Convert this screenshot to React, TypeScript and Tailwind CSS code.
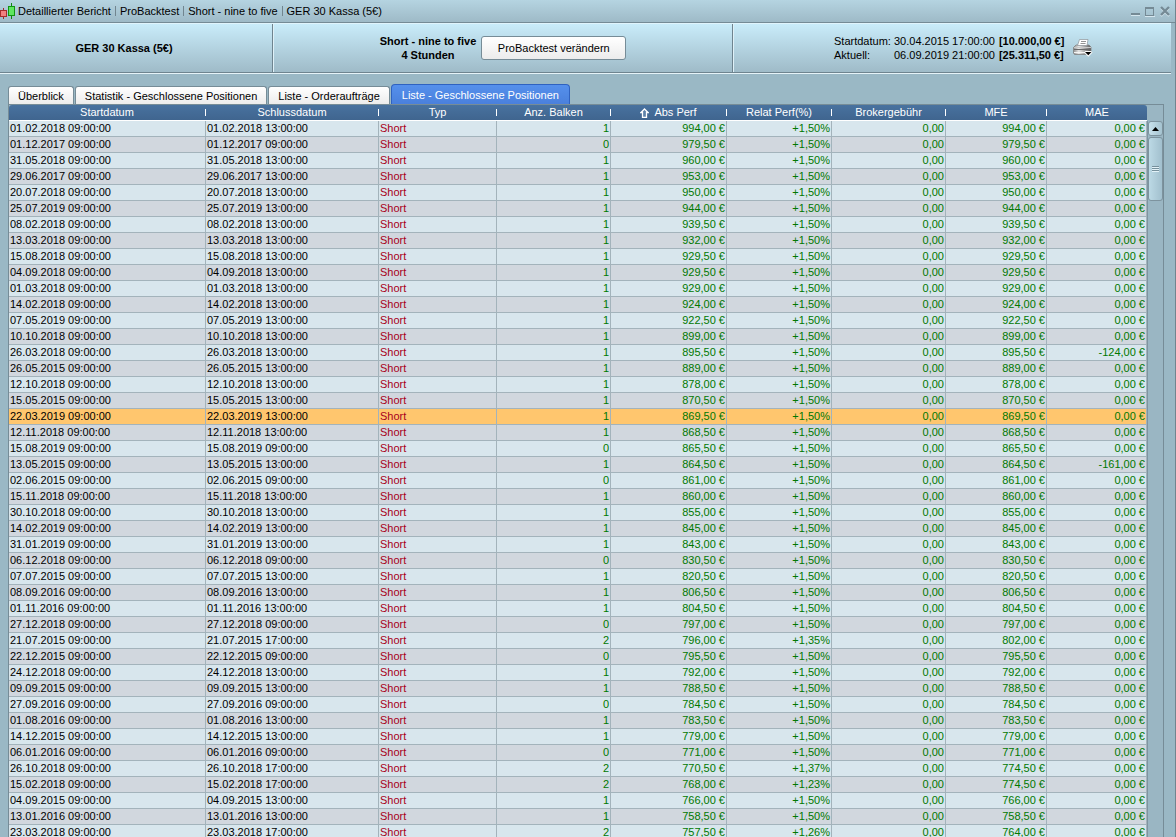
import React from "react";

type Position = {
  date: string;
  endHour: string;
  bars: number;
  perf: string;
  rel: string;
  mfe: string;
  mae: string;
};

/* date | closing hour | bars | abs. performance | rel. performance | MFE | MAE */
const SOURCE = `01.02.2018|13|1|994,00
01.12.2017|09|0|979,50
31.05.2018|13|1|960,00
29.06.2017|13|1|953,00
20.07.2018|13|1|950,00
25.07.2019|13|1|944,00
08.02.2018|13|1|939,50
13.03.2018|13|1|932,00
15.08.2018|13|1|929,50
04.09.2018|13|1|929,50
01.03.2018|13|1|929,00
14.02.2018|13|1|924,00
07.05.2019|13|1|922,50
10.10.2018|13|1|899,00
26.03.2018|13|1|895,50|1,50|895,50|-124,00
26.05.2015|13|1|889,00
12.10.2018|13|1|878,00
15.05.2015|13|1|870,50
22.03.2019|13|1|869,50
12.11.2018|13|1|868,50
15.08.2019|09|0|865,50
13.05.2015|13|1|864,50|1,50|864,50|-161,00
02.06.2015|09|0|861,00
15.11.2018|13|1|860,00
30.10.2018|13|1|855,00
14.02.2019|13|1|845,00
31.01.2019|13|1|843,00
06.12.2018|09|0|830,50
07.07.2015|13|1|820,50
08.09.2016|13|1|806,50
01.11.2016|13|1|804,50
27.12.2018|09|0|797,00
21.07.2015|17|2|796,00|1,35|802,00
22.12.2015|09|0|795,50
24.12.2018|13|1|792,00
09.09.2015|13|1|788,50
27.09.2016|09|0|784,50
01.08.2016|13|1|783,50
14.12.2015|13|1|779,00
06.01.2016|09|0|771,00
26.10.2018|17|2|770,50|1,37|774,50
15.02.2018|17|2|768,00|1,23|774,50
04.09.2015|13|1|766,00
13.01.2016|13|1|758,50
23.03.2018|17|2|757,50|1,26|764,00`;

const POSITIONS: Position[] = SOURCE.split("\n").map((line) => {
  const [date, endHour, bars, perf, rel = "1,50", mfe = perf, mae = "0,00"] = line.split("|");
  return { date, endHour, bars: Number(bars), perf, rel, mfe, mae };
});

const SELECTED = "22.03.2019";

const COLUMNS = [
  { label: "Startdatum", width: "w-[197px]" },
  { label: "Schlussdatum", width: "w-[173px]" },
  { label: "Typ", width: "w-[118px]" },
  { label: "Anz. Balken", width: "w-[114px]" },
  { label: "Abs Perf", width: "w-[116px]", sorted: true },
  { label: "Relat Perf(%)", width: "w-[105px]" },
  { label: "Brokergebühr", width: "w-[114px]" },
  { label: "MFE", width: "w-[101px]" },
  { label: "MAE", width: "w-[100px]" },
];

const TABS = [
  "Überblick",
  "Statistik - Geschlossene Positionen",
  "Liste - Orderaufträge",
  "Liste - Geschlossene Positionen",
];

function CandleIcon() {
  return (
    <svg width="16" height="16" viewBox="0 0 16 16" shapeRendering="crispEdges" aria-hidden="true">
      <rect x="3" y="5" width="1" height="11" fill="#a02a2a" />
      <rect x="0" y="7" width="7" height="7" fill="#a82c2c" />
      <rect x="1" y="8" width="5" height="5" fill="#f28080" />
      <rect x="11" y="0" width="1" height="16" fill="#0d8a0d" />
      <rect x="8" y="3" width="7" height="10" fill="#129312" />
      <rect x="9" y="4" width="5" height="8" fill="#5fe65f" />
    </svg>
  );
}

function PrinterIcon() {
  return (
    <svg width="20" height="18" viewBox="0 0 20 18" aria-hidden="true">
      <defs>
        <linearGradient id="printer-body" x1="0" y1="0" x2="1" y2="0">
          <stop offset="0" stopColor="#8f8f8f" />
          <stop offset="0.3" stopColor="#e6e6e6" />
          <stop offset="1" stopColor="#5c5c5c" />
        </linearGradient>
      </defs>
      <path d="M0.500 8.500 3 6h13l2 2V14l-1.500 1.500h-15L0.500 14Z" fill="url(#printer-body)" stroke="#808080" strokeWidth="0.8" />
      <path d="M1 8.500h17" stroke="#c9c9c9" />
      <path d="M1 10.500h17" stroke="#6a6a6a" />
      <path d="M1 13.500h12" stroke="#f4f4f4" />
      <path d="M6.500.5h8.500L14 6.500H4.500Z" fill="#fff" stroke="#8c9499" strokeWidth="0.7" />
      <path d="M8 2.500h5M7.500 4.500h5" stroke="#777" strokeWidth="0.8" />
      <path d="M11 13.500 12.500 12h5.500l1.500 1.500-4.200 4.200Z" fill="#fff" />
      <path d="M12 13h6.500l-3.200 3.200Z" fill="#000" />
    </svg>
  );
}

function SortArrow() {
  return (
    <svg width="9" height="10" viewBox="0 0 9 10" aria-hidden="true">
      <path d="M4.500 1 8 4.500H6.500v5h-4v-5H1Z" fill="#5d82aa" stroke="#fff" strokeWidth="1.300" />
    </svg>
  );
}

function TitleBar() {
  const crumbs = ["Detaillierter Bericht", "ProBacktest", "Short - nine to five", "GER 30 Kassa (5€)"];
  return (
    <header className="flex h-[23px] shrink-0 items-center justify-between border-b border-[#758b96] bg-linear-to-b from-[#b5d4e1] to-[#9ebac7] pr-[5px]">
      <div className="flex items-center gap-[2px]">
        <CandleIcon />
        <nav aria-label="Pfad" className="flex items-center">
          {crumbs.map((crumb, i) => (
            <React.Fragment key={crumb}>
              {i > 0 && <span className="mx-[4px] h-[10px] w-px bg-[#71858f]" />}
              <span>{crumb}</span>
            </React.Fragment>
          ))}
        </nav>
      </div>
      <div className="flex items-center gap-[5px]">
        <button type="button" aria-label="Minimieren">
          <svg width="10" height="11" viewBox="0 0 10 11" shapeRendering="crispEdges">
            <path d="M1 7h9v2H1Z" fill="#758a95" />
            <path d="M1 9h9v1H1Z" fill="#d5e6ee" />
          </svg>
        </button>
        <button type="button" aria-label="Maximieren">
          <svg width="10" height="11" viewBox="0 0 10 11" shapeRendering="crispEdges">
            <path d="M0 10h10v1H0Z" fill="#d5e6ee" />
            <path d="M0.500 1.500h8v8h-8Z" fill="none" stroke="#758a95" />
            <path d="M0 1h9v2H0Z" fill="#758a95" />
          </svg>
        </button>
        <button type="button" aria-label="Schließen">
          <svg width="10" height="11" viewBox="0 0 10 11">
            <path d="m1 2 8 8M9 2l-8 8" stroke="#d5e6ee" strokeWidth="2" />
            <path d="m1 1 8 8M9 1 1 9" stroke="#758a95" strokeWidth="2.400" />
          </svg>
        </button>
      </div>
    </header>
  );
}

function SummaryPanel() {
  return (
    <section className="mr-[4px] flex h-[51px] shrink-0 border-y border-t-[#e0f4fc] border-b-[#e6f3f8]">
      <div className="flex min-w-0 flex-1 border-b border-[#6f848f] bg-linear-to-b from-[#c9ecfa] to-[#9fbbc8]">
        <div className="flex w-[273px] shrink-0 items-center justify-center border-r border-[#6f848f] pr-[24px] font-bold">
          GER 30 Kassa (5€)
        </div>
        <div className="flex w-[460px] shrink-0 items-center justify-center gap-[5px] border-r border-l border-r-[#6f848f] border-l-[#dff1f8]">
          <div className="text-center leading-[14px] font-bold">
            Short - nine to five
            <br />4 Stunden
          </div>
          <button
            type="button"
            className="h-[24px] w-[145px] rounded-[3px] border border-[#768c97] bg-linear-to-b from-white to-[#ececec]"
          >
            ProBacktest verändern
          </button>
        </div>
        <div className="flex flex-1 items-center gap-[9px] border-l border-[#dff1f8] pl-[100px]">
          <dl className="grid grid-cols-[60px_auto_auto] leading-[14px] whitespace-nowrap">
            <dt>Startdatum:</dt>
            <dd>30.04.2015 17:00:00</dd>
            <dd className="pl-[4px] font-bold">[10.000,00 €]</dd>
            <dt>Aktuell:</dt>
            <dd>06.09.2019 21:00:00</dd>
            <dd className="pl-[4px] font-bold">[25.311,50 €]</dd>
          </dl>
          <button type="button" aria-label="Drucken">
            <PrinterIcon />
          </button>
        </div>
      </div>
    </section>
  );
}

function TabBar() {
  return (
    <div role="tablist" className="ml-[8px] flex h-[30px] shrink-0 items-end">
      {TABS.map((tab, i) =>
        i === TABS.length - 1 ? (
          <button
            key={tab}
            role="tab"
            aria-selected="true"
            type="button"
            className="h-[20px] rounded-t-[4px] border border-b-0 border-[#2f62c0] bg-linear-to-b from-[#5590ec] to-[#4a80dc] px-[10px] text-white"
          >
            {tab}
          </button>
        ) : (
          <button
            key={tab}
            role="tab"
            aria-selected="false"
            type="button"
            className="mr-px h-[18px] rounded-t-[3px] border border-b-0 border-[#768c97] bg-linear-to-b from-white to-[#ececec] px-[9px]"
          >
            {tab}
          </button>
        ),
      )}
    </div>
  );
}

function PositionsTable() {
  return (
    <table className="w-full table-fixed border-separate border-spacing-0 self-start">
      <thead>
        <tr className="text-white">
          {COLUMNS.map((col, i) => (
            <th
              key={col.label}
              scope="col"
              aria-sort={col.sorted ? "descending" : undefined}
              className={`${col.width} h-[16px] border-b border-white bg-linear-to-b from-[#48729f] to-[#40658f] p-0 font-normal first:rounded-tl-[3px] last:rounded-tr-[3px]`}
            >
              <div className="flex h-[15px] items-center">
                <button type="button" className="flex flex-1 items-center justify-center gap-[5px] leading-[15px]">
                  {col.sorted && <SortArrow />}
                  {col.label}
                </button>
                {i < COLUMNS.length - 1 && <span className="h-[7px] w-px bg-white" />}
              </div>
            </th>
          ))}
        </tr>
      </thead>
      <tbody>
        {POSITIONS.map((p) => (
          <tr
            key={p.date}
            aria-selected={p.date === SELECTED}
            className={
              p.date === SELECTED
                ? "bg-[#ffc66e] text-[#007800]"
                : "text-[#007800] odd:bg-[#d8e6ed] even:bg-[#d1d7de]"
            }
          >
            <Cell tone="text-black">{p.date} 09:00:00</Cell>
            <Cell tone="text-black">
              {p.date} {p.endHour}:00:00
            </Cell>
            <Cell tone="text-[#a80020]">Short</Cell>
            <Cell tone="text-right">{p.bars}</Cell>
            <Cell tone="text-right">{p.perf} €</Cell>
            <Cell tone="text-right">+{p.rel}%</Cell>
            <Cell tone="text-right">0,00</Cell>
            <Cell tone="text-right">{p.mfe} €</Cell>
            <Cell tone="text-right">{p.mae} €</Cell>
          </tr>
        ))}
      </tbody>
    </table>
  );
}

function Cell({ tone, children }: { tone: string; children: React.ReactNode }) {
  return (
    <td
      className={`${tone} h-[16px] overflow-hidden border-r border-b border-[#a3b3bb] px-px py-0 leading-[15px] whitespace-nowrap`}
    >
      {children}
    </td>
  );
}

function ScrollBar() {
  return (
    <div className="flex w-[16px] shrink-0 flex-col bg-[#9ab6c3] pt-[16px]">
      <div className="flex flex-1 flex-col gap-px border-l border-[#7e949f]">
        <button
          type="button"
          aria-label="Nach oben"
          className="flex h-[15px] items-center justify-center rounded-[3px] border border-[#7d939e] bg-linear-to-r from-[#c8e2ec] to-[#a5c3d0]"
        >
          <svg width="7" height="4" viewBox="0 0 7 4" aria-hidden="true">
            <path d="M0 4 3.500 0 7 4Z" fill="#000" />
          </svg>
        </button>
        <div
          role="scrollbar"
          aria-controls="positions"
          aria-orientation="vertical"
          aria-valuenow={0}
          className="flex h-[64px] flex-col items-center justify-center rounded-[3px] border border-[#7d939e] bg-linear-to-r from-[#bcd9e5] to-[#a2c0ce]"
        >
          <span className="h-[2px] w-[7px] border-b border-[#e3f2f8] bg-[#76909c]" />
          <span className="h-[2px] w-[7px] border-b border-[#e3f2f8] bg-[#76909c]" />
          <span className="h-[2px] w-[7px] border-b border-[#e3f2f8] bg-[#76909c]" />
        </div>
      </div>
    </div>
  );
}

export default function App() {
  return (
    <div className="flex h-screen flex-col overflow-hidden border-r border-[#71858f] bg-[#9ab8c5] font-['Liberation_Sans',Arial,sans-serif] text-[11px] leading-[14px] text-black">
      <TitleBar />
      <SummaryPanel />
      <TabBar />
      <main
        id="positions"
        className="mr-[11px] ml-[8px] flex min-h-0 flex-1 overflow-hidden border border-b-0 border-[#768c97]"
      >
        <PositionsTable />
        <ScrollBar />
      </main>
    </div>
  );
}
